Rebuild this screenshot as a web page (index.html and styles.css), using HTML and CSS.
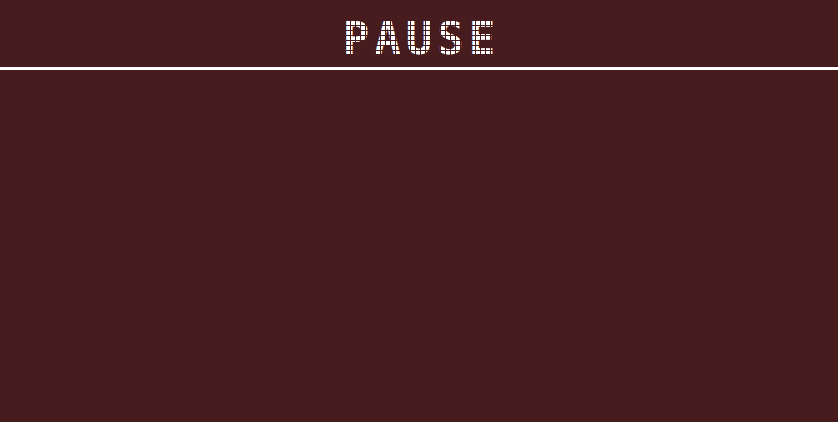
FILE: index.html
```html
<!DOCTYPE html>
<html lang="en">
<head>
<meta charset="utf-8">
<title>Pause</title>
<link rel="stylesheet" href="styles.css">
</head>
<body>
<header class="bar">
  <h1 class="title">PAUSE</h1>
</header>
<main class="stage"></main>
</body>
</html>
```
FILE: styles.css
```css
html, body {
  margin: 0;
  padding: 0;
  height: 100%;
  background: #471c1e;
}
body {
  display: flex;
  flex-direction: column;
  font-family: "DejaVu Sans Mono", monospace;
}
.bar {
  height: 67px;
  border-bottom: 3px solid #ffffff;
  display: flex;
  justify-content: center;
  align-items: flex-start;
}
.title {
  position: relative;
  margin: 0;
  padding-top: 17px;
  padding-left: 5px;
  font-size: 44px;
  line-height: 44px;
  font-weight: bold;
  letter-spacing: 5px;
  color: #ffffff;
}
.title::after {
  content: "";
  position: absolute;
  inset: 0;
  background-image:
    linear-gradient(90deg, #471c1e 1px, transparent 1px),
    linear-gradient(#471c1e 1px, transparent 1px);
  background-size: 5px 5px;
  background-position: 2px 0;
}
.stage {
  flex: 1;
}
```
